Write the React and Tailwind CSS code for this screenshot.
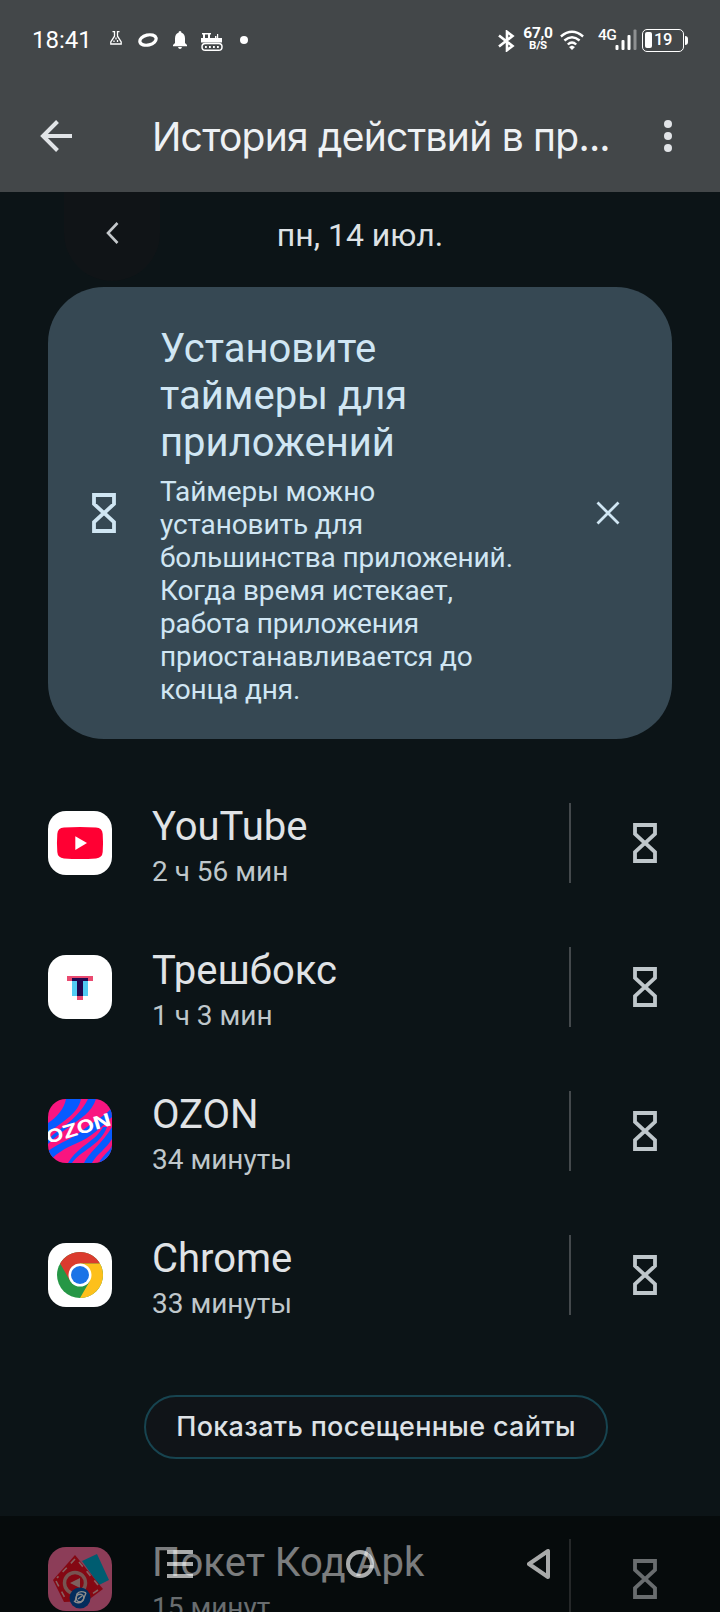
import React from 'react';

const Hourglass = ({ className }) => (
  <svg width="24" height="40" viewBox="0 0 24 40" fill="none" stroke="currentColor" className={className}>
    <path d="M2 2h20v8.9L12 20.2 2 10.9zM2 38h20v-8.9L12 19.8 2 29.1z" strokeWidth="3.8" strokeLinejoin="miter" />
  </svg>
);

const YouTubeIcon = () => (
  <svg width="64" height="64" viewBox="0 0 64 64">
    <rect width="64" height="64" fill="#fff" />
    <path d="M16 16.6Q32 15.2 48 16.6Q54.3 17 54.7 23Q55.4 32 54.7 41Q54.3 47 48 47.4Q32 48.8 16 47.4Q9.7 47 9.3 41Q8.6 32 9.3 23Q9.7 17 16 16.6Z" fill="#ff0033" />
    <path d="M27.3 25.2v13.8L39 32z" fill="#fff" />
  </svg>
);

const TrashboxIcon = () => (
  <svg width="64" height="64" viewBox="0 0 64 64">
    <rect width="64" height="64" fill="#fff" />
    <path d="M19 21h26v5H19zM29 40h6v5h-6z" fill="#ea4a70" />
    <path d="M24 26h16v15H24z" fill="#52cdf4" />
    <path d="M24 23h16v3h-5v15h-6V26h-5z" fill="#21074f" />
  </svg>
);

const OzonIcon = () => (
  <svg width="64" height="64" viewBox="0 0 64 64">
    <rect width="64" height="64" fill="#f91580" />
    <g fill="#075bff">
      <path d="M18 0h15C30 14 17 21 0 34V24C9 18 16 10 18 0z" />
      <path d="M40 0h8c-4 13-16 20-27 28C12 34 5 40 0 45v-4c9-11 28-18 40-41z" />
      <path d="M64 9v9C52 29 44 38 27 45 16 50 9 54 4 60L0 52c12-9 25-12 35-21C46 22 54 19 64 9z" />
      <path d="M55 28C48 42 30 47 20 64h4c9-13 28-17 35-36z" />
      <path d="M64 28v12C58 50 49 55 44 64h-8c5-11 18-19 28-36z" />
      <path d="M64 47v10l-6 7h-7c3-7 9-10 13-17z" />
    </g>
    <text
      x="0"
      y="45"
      transform="rotate(-16.5 0 45)"
      textLength="67"
      lengthAdjust="spacingAndGlyphs"
      fill="#fff"
      className="font-['Inter',sans-serif] text-[18px] font-bold"
    >
      OZON
    </text>
  </svg>
);

const ChromeIcon = () => (
  <svg width="64" height="64" viewBox="0 0 64 64">
    <rect width="64" height="64" fill="#fff" />
    <circle cx="32" cy="32" r="23" fill="#269746" />
    <path d="M32 32L12.1 20.5A23 23 0 0 1 51.9 20.5H32z" fill="#db3b2e" />
    <path d="M12.1 20.5L22 37.7 32 32V20.5z" fill="#db3b2e" />
    <path d="M32 20.5H51.9A23 23 0 0 1 32 55L42 37.7 32 32z" fill="#fdc01b" />
    <circle cx="32" cy="32" r="11.5" fill="#fff" />
    <circle cx="32" cy="32" r="9" fill="#1b73e7" />
  </svg>
);

const PocketCodeIcon = () => (
  <svg width="64" height="64" viewBox="0 0 64 64">
    <rect width="64" height="64" fill="#ff6fa0" />
    <path d="M34 14l15-7 12 26-10 5z" fill="#00a8cc" />
    <path d="M27 8l28 34-16 12-23 1L5 33z" fill="#f00f24" />
    <path d="M27 12L9 31M8 34l9 17M31 15l19 23M50 43L38 51" fill="none" stroke="#f7aeb0" strokeWidth="1.6" strokeDasharray="6 6" />
    <circle cx="27" cy="36" r="10.5" fill="none" stroke="#d99a94" strokeWidth="3.5" />
    <path d="M22 36l10-5v10z" fill="#e5b0ab" />
    <circle cx="32" cy="51" r="10.5" fill="#0650a8" />
    <g fill="none" stroke="#fff" strokeWidth="1.4">
      <circle cx="32" cy="51" r="3.8" />
      <path d="M26 54c3 3 7 2 9-1l3-7M27 55l2-8c2-3 5-3 9-1M30 52l4-3" />
    </g>
  </svg>
);

const apps = [
  { name: 'YouTube', time: '2 ч 56 мин', Icon: YouTubeIcon },
  { name: 'Трешбокс', time: '1 ч 3 мин', Icon: TrashboxIcon },
  { name: 'OZON', time: '34 минуты', Icon: OzonIcon },
  { name: 'Chrome', time: '33 минуты', Icon: ChromeIcon },
];

const AppRow = ({ name, time, Icon }) => (
  <div className="flex h-36 shrink-0 items-center pl-12">
    <div className="h-16 w-16 shrink-0 overflow-hidden rounded-[18px]">
      <Icon />
    </div>
    <div className="ml-10 h-20 w-[417px] whitespace-nowrap">
      <div className="text-[40px] leading-[47px] text-[#e0e3e6]">{name}</div>
      <div className="mt-[5px] text-[28px] leading-[33px] text-[#bfc7cb]">{time}</div>
    </div>
    <div className="h-20 w-0.5 bg-[#44494c]" />
    <Hourglass className="ml-[62px] text-[#bfc7cb]" />
  </div>
);

const StatusBar = () => (
  <div className="flex h-20 items-center pl-8 pr-8 text-white">
    <span className="w-[78px] text-[24px] leading-none">18:41</span>
    <svg width="12" height="14" viewBox="0 0 12 14" fill="none" stroke="currentColor" strokeWidth="1.3" className="-mt-1">
      <path d="M2.5.7h2v4.5L.8 11v2h10.4v-2L7.5 5.2V.7h2M6 6.5v2M4 9.5v1.5M7.5 9v2" />
    </svg>
    <svg width="20" height="16" viewBox="0 0 20 16" fill="none" stroke="currentColor" className="ml-4">
      <ellipse cx="10" cy="8" rx="8.3" ry="5" strokeWidth="3.2" transform="rotate(-14 10 8)" />
    </svg>
    <svg width="14" height="18" viewBox="0 0 14 18" fill="currentColor" className="ml-[15px]">
      <path d="M7 0q1.5 0 1.5 1.8Q12 3 12 7.5V12l2 2v1.2H0V14l2-2V7.5Q2 3 5.5 1.8 5.5 0 7 0zM5 16h4q-.5 1.9-2 1.9T5 16z" />
    </svg>
    <svg width="22" height="18" viewBox="0 0 22 18" className="ml-3.5 mt-1">
      <path d="M1 0h9v1.5H9V5h5V3h1.5v2H16V1h1.2v4H21v4.500H0V5h2V1.500H1zM4 1.500V5h3V1.500z" fill="currentColor" fillRule="evenodd" />
      <rect x="1" y="10.5" width="20" height="6.700" rx="3.3" fill="none" stroke="currentColor" strokeWidth="1.5" />
      <path d="M4 14h15" stroke="currentColor" strokeWidth="1.8" strokeDasharray="1.8 2.2" />
    </svg>
    <span className="ml-[17px] h-2 w-2 rounded-full bg-white" />

    <svg width="17" height="22" viewBox="0 0 17 22" fill="none" stroke="currentColor" strokeWidth="2.6" className="ml-auto mt-0.5">
      <path d="M1 5.500L14.500 16 9 20.200V1.800L14.500 6 1 16.500" />
    </svg>
    <div className="-mt-[3px] ml-2 flex w-[30px] flex-col items-center font-bold">
      <span className="text-[15.5px] leading-[14px] tracking-[-0.3px]">67,0</span>
      <span className="text-[11.5px] leading-[11px] tracking-[-0.3px]">B/S</span>
    </div>
    <svg width="24" height="20" viewBox="0 0 24 20" fill="none" stroke="currentColor" strokeWidth="2.4" className="ml-[7px]">
      <path d="M.9 6.500Q12-2.800 23.100 6.500M4.400 10.500Q12 3.800 19.600 10.500M7.800 14.500Q12 10.500 16.200 14.500" />
      <path d="M12 15.500l3 1.500-3 3-3-3z" fill="currentColor" stroke="none" />
    </svg>
    <div className="ml-3.5 flex h-[22px] items-end">
      <span className="w-[20px] self-start text-[15.5px] font-medium leading-[13px] tracking-[-0.5px]">4G</span>
      <svg width="22" height="22" viewBox="0 0 22 22" fill="currentColor" className="-ml-[3px]">
        <rect x="0.5" y="16" width="3" height="5" rx="1" />
        <rect x="6.5" y="11" width="3" height="10" rx="1" />
        <rect x="12.5" y="6" width="3" height="15" rx="1" />
        <rect x="18.5" y="0.5" width="3" height="20.5" rx="1" opacity="0.4" />
      </svg>
    </div>
    <div className="ml-[5px] flex items-center">
      <div className="flex h-[23px] w-[42px] items-center rounded-[5px] border-[1.5px] border-white pl-0.5">
        <span className="h-4 w-[7px] rounded-[2px] bg-white" />
        <span className="ml-[2px] text-[16.5px] font-medium leading-none tracking-[-0.5px]">19</span>
      </div>
      <span className="ml-px h-[9px] w-[3px] rounded-r-sm bg-white" />
    </div>
  </div>
);

const NavigationBar = () => (
  <div className="absolute inset-x-0 bottom-0 h-24 bg-black/45">
    <div className="flex h-24 items-center gap-[153px] pl-[167px] text-white/65">
      <svg width="26" height="28" viewBox="0 0 26 28" fill="currentColor">
        <path d="M0 0h26v4H0zM0 12h26v4H0zM0 24h26v4H0z" />
      </svg>
      <svg width="28" height="28" viewBox="0 0 28 28" fill="none" stroke="currentColor" strokeWidth="4">
        <circle cx="14" cy="14" r="12" />
      </svg>
      <svg width="24" height="30" viewBox="0 0 24 30" fill="none" stroke="currentColor" strokeWidth="4" strokeLinejoin="round">
        <path d="M2 15L21 2v26z" />
      </svg>
    </div>
  </div>
);

const App = () => {
  return (
    <div className="relative flex h-[1612px] w-[720px] flex-col overflow-hidden bg-[#0c1417] font-['Roboto',sans-serif]">
      <header className="h-48 shrink-0 bg-[#434749]">
        <StatusBar />
        <div className="flex h-28 items-center pl-10 pr-12 text-[#e1e4e7]">
          <svg width="32" height="32" viewBox="0 0 32 32" fill="none" stroke="currentColor" strokeWidth="4">
            <path d="M32 16H3M17.5 1.5L3 16l14.5 14.5" />
          </svg>
          <h1 className="ml-20 w-[470px] whitespace-nowrap pt-0.5 font-['Inter',sans-serif] text-[39px] leading-[48px] tracking-[-0.76px] text-[#eef1f4]">
            История действий в пр...
          </h1>
          <svg width="8" height="32" viewBox="0 0 8 32" fill="currentColor" className="ml-auto">
            <circle cx="4" cy="4" r="4" />
            <circle cx="4" cy="16" r="4" />
            <circle cx="4" cy="28" r="4" />
          </svg>
        </div>
      </header>

      <div className="grid h-[95px] shrink-0 grid-cols-[96px_1fr_96px] items-start px-16">
        <button className="flex h-[89px] items-center justify-center rounded-b-full bg-[#101417]">
          <svg width="13" height="22" viewBox="0 0 13 22" fill="none" stroke="#c4c8cb" strokeWidth="2.6" className="-mt-2">
            <path d="M11.5 1L2 11l9.5 10" />
          </svg>
        </button>
        <div className="pt-6 text-center text-[32px] leading-[38px] text-[#dee2e5]">пн, 14 июл.</div>
      </div>

      <section className="mx-12 flex h-[452px] shrink-0 items-center rounded-[56px] bg-[#364853] pl-11 text-[#d0e6f3]">
        <Hourglass />
        <div className="ml-11 w-[370px] whitespace-nowrap pt-[5px]">
          <h2 className="text-[40px] leading-[47px]">
            Установите<br />таймеры для<br />приложений
          </h2>
          <p className="mt-[9px] text-[28px] leading-[33px] tracking-[-0.12px]">
            Таймеры можно<br />установить для<br />большинства приложений.<br />Когда время истекает,<br />работа приложения<br />приостанавливается до<br />конца дня.
          </p>
        </div>
        <svg width="24" height="24" viewBox="0 0 24 24" fill="none" stroke="currentColor" strokeWidth="2.8" className="ml-[66px]">
          <path d="M1.5 1.5l21 21M22.5 1.5l-21 21" />
        </svg>
      </section>

      <div className="mt-8 flex shrink-0 flex-col">
        {apps.map((app) => (
          <AppRow key={app.name} {...app} />
        ))}
      </div>

      <button className="mb-12 ml-36 mt-12 flex h-16 w-[464px] shrink-0 items-center justify-center whitespace-nowrap rounded-full border-2 border-[#174450] bg-[#101418] font-['Inter',sans-serif] text-[27px] font-medium tracking-[0.33px] text-[#dee2e6]">
        Показать посещенные сайты
      </button>

      <AppRow name="Покет Код Apk" time="15 минут" Icon={PocketCodeIcon} />
      <NavigationBar />
    </div>
  );
};

export default App;
